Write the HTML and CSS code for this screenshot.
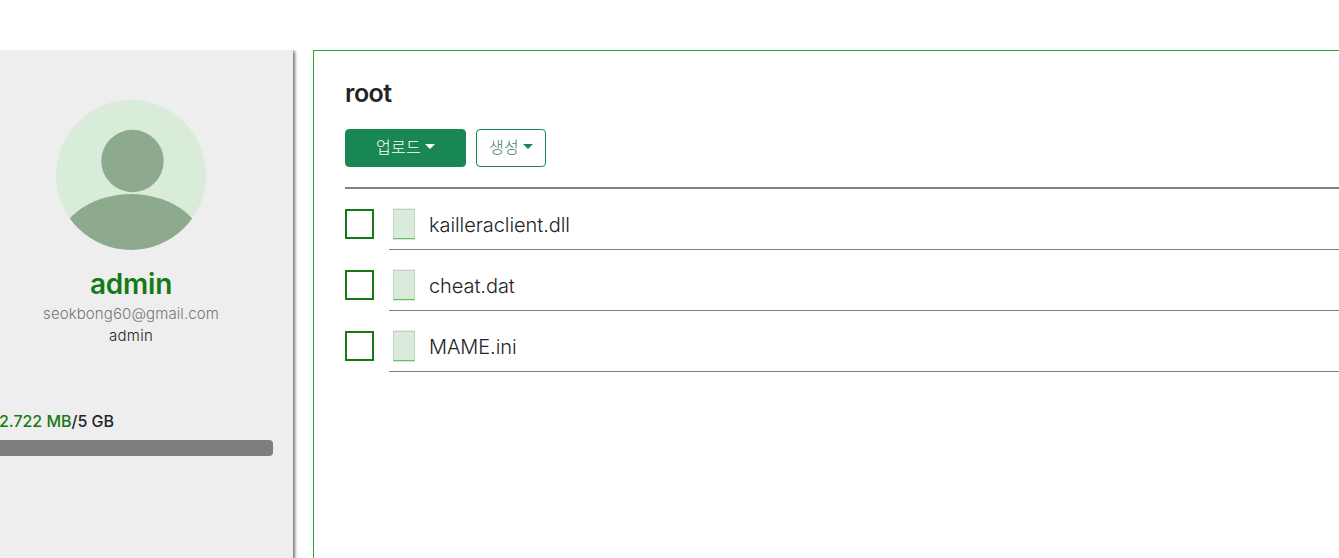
FILE: index.html
```html
<!DOCTYPE html>
<html lang="ko">
<head>
<meta charset="utf-8">
<title>root</title>
<link rel="stylesheet" href="styles.css">
</head>
<body>
<div class="app">
  <aside class="sidebar">
    <svg class="avatar" viewBox="0 0 150 150">
      <defs><clipPath id="round"><circle cx="75" cy="75" r="75"/></clipPath></defs>
      <g clip-path="url(#round)">
        <rect width="150" height="150" fill="#d9ebd9"/>
        <circle cx="76.5" cy="61" r="31.2" fill="#8eaa8e"/>
        <ellipse cx="75" cy="154" rx="76" ry="60" fill="#8eaa8e"/>
      </g>
    </svg>
    <h2 class="name">admin</h2>
    <p class="email">seokbong60@gmail.com</p>
    <p class="role">admin</p>
    <div class="usage"><span class="used">2.722 MB</span><span class="total">/5 GB</span></div>
    <div class="meter"></div>
  </aside>
  <main class="panel">
    <h1 class="title">root</h1>
    <div class="actions">
      <button class="btn upload"><span class="label">업로드</span><i class="caret"></i></button>
      <button class="btn create"><span class="label">생성</span><i class="caret"></i></button>
    </div>
    <ul class="files">
      <li class="file"><span class="check"></span><div class="entry"><i class="thumb"></i><span class="fname">kailleraclient.dll</span></div></li>
      <li class="file"><span class="check"></span><div class="entry"><i class="thumb"></i><span class="fname">cheat.dat</span></div></li>
      <li class="file"><span class="check"></span><div class="entry"><i class="thumb"></i><span class="fname">MAME.ini</span></div></li>
    </ul>
  </main>
</div>
</body>
</html>
```
FILE: styles.css
```css
* { box-sizing: border-box; }
body {
  margin: 0;
  background: #fff;
  color: #212529;
  font-family: Inter, "Noto Sans CJK KR", sans-serif;
}
h1, h2, p, ul { margin: 0; padding: 0; }
.app {
  display: flex;
  gap: 20px;
  height: 558px;
  padding-top: 50px;
}
.sidebar {
  flex: 0 0 293px;
  padding-top: 50px;
  background: #eee;
  box-shadow: 1px 2px 3px 1px #777;
  clip-path: inset(0 -6px 0 0);
}
.avatar { display: block; width: 150px; height: 150px; margin-left: 56px; }
.name, .email, .role { width: 262px; text-align: center; white-space: nowrap; }
.name { margin-top: 16px; font-size: 28px; line-height: 36px; font-weight: 600; letter-spacing: -0.2px; color: #157a15; }
.email { margin-top: 1px; font-size: 15px; line-height: 22px; font-weight: 300; letter-spacing: 0.1px; color: #777; }
.role { font-size: 15px; line-height: 22px; font-weight: 300; letter-spacing: 0.3px; }
.usage { margin-top: 62px; margin-left: -1px; font-size: 16px; line-height: 24px; font-weight: 500; letter-spacing: -0.02px; white-space: nowrap; }
.used { color: #157a15; }
.meter { width: 273px; height: 16px; margin-top: 7px; background: #7e7e7e; border-radius: 0 4px 4px 0; }
.panel {
  flex: 1;
  padding: 24px 0 0 31px;
  border: solid #1fae27;
  border-width: 1px 0 0 1px;
}
.title { font-size: 25px; line-height: 36px; font-weight: 600; letter-spacing: -0.5px; }
.actions {
  display: flex;
  gap: 10px;
  height: 78px;
  padding-top: 18px;
  border-bottom: 2px solid #808080;
}
.btn {
  display: flex;
  align-items: center;
  justify-content: center;
  gap: 4px;
  height: 38px;
  padding: 0 0 2px;
  border: 1px solid #198754;
  border-radius: 4px;
  font-family: "Noto Sans CJK KR", sans-serif;
  font-size: 16px;
  line-height: 24px;
  font-weight: 300;
}
.label { padding-bottom: 2px; letter-spacing: 0.3px; }
.upload { width: 121px; background: #198754; color: #fff; }
.create { width: 70px; background: #fff; color: #198754; }
.create .label { color: #46806a; }
.caret {
  margin-bottom: 1px;
  border: solid transparent;
  border-width: 5px 5px 0;
  border-top-color: currentColor;
}
.files { list-style: none; }
.file { display: flex; gap: 15px; height: 61px; padding-top: 20px; }
.check { flex: none; width: 29px; height: 30px; border: 2px solid #157a15; }
.entry {
  flex: 1;
  display: flex;
  align-items: flex-start;
  height: 41px;
  padding-left: 4px;
  border-bottom: 1px solid #808080;
}
.thumb {
  width: 22px;
  height: 30px;
  margin-right: 14px;
  background: #d9ebd9;
  border: 1px solid #c5d0c5;
  border-bottom-color: #54c954;
  box-shadow: 0 1px #e2e2e2, 0 -1px #ededed;
}
.fname { font-size: 20px; line-height: 32px; font-weight: 300; letter-spacing: -0.07px; white-space: nowrap; }
```
